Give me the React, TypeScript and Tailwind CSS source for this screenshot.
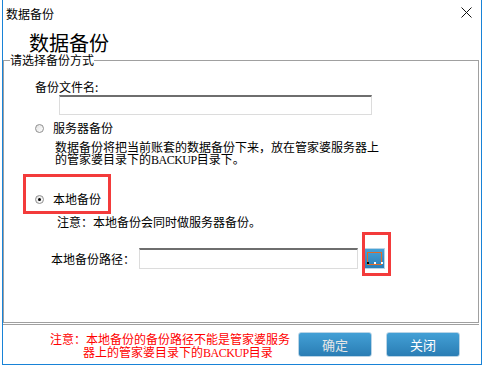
import React from "react";

const font = "font-['Noto_Sans_CJK_SC','Noto_Sans',sans-serif]";

function Radio({ checked }: { checked?: boolean }) {
    return (
        <span className="relative inline-flex w-[9px] h-[9px] rounded-full border border-[#8f8f8f] bg-gradient-to-br from-[#e2e2e2] to-white items-center justify-center">
            {checked && <span className="w-[3px] h-[3px] rounded-full bg-black" />}
        </span>
    );
}

function BlueButton({ label, dim }: { label: string; dim?: boolean }) {
    return (
        <button
            type="button"
            className={`w-[74px] h-[25px] rounded-[3px] border border-[#b9d4e6] bg-gradient-to-b from-[#43a0d6] to-[#2a7db4] text-[13px] leading-[23px] ${dim ? "text-[#e6e6e6]" : "text-white"}`}
        >
            {label}
        </button>
    );
}

export default function App() {
    return (
        <div className={`w-[483px] h-[368px] bg-white overflow-hidden relative text-[12px] text-black ${font}`}>
            <div className="ml-[2px] w-[480px] h-[365px] border-x border-b border-[#1883d7] flex flex-col">
                {/* title bar */}
                <div className="h-[27px] flex items-center justify-between pl-[3px] pr-[9px]">
                    <span className="leading-[14px]">数据备份</span>
                    <svg width="11" height="11" viewBox="0 0 11 11" className="mb-[2px]">
                        <path d="M0.5 0.5 L10.5 10.5 M10.5 0.5 L0.5 10.5" stroke="#111" strokeWidth="1" />
                    </svg>
                </div>

                <div className="h-[26px] pt-[4px] pl-[26px] text-[20px] leading-[24px]">数据备份</div>

                <fieldset className="relative w-[476px] h-[270px] border border-[#a0a0a0]">
                    <legend className="ml-[6px] px-0 leading-[14px]">请选择备份方式</legend>

                    <div className="pl-[31px] pt-[13px] leading-[14px]">备份文件名:</div>
                    <div className="ml-[55px] mt-[1px] w-[313px] h-[20px] border border-[#dcdcdc] border-t-2 border-t-[#6e6e6e] bg-white" />

                    <div className="ml-[31px] mt-[6px] h-[14px] flex items-center gap-[9px]">
                        <Radio />
                        <span className="leading-[14px]">服务器备份</span>
                    </div>
                    <div className="ml-[51px] mt-[6px] leading-[12px]">
                        <div>数据备份将把当前账套的数据备份下来，放在管家婆服务器上</div>
                        <div>
                            的管家婆目录下的<span className="font-['Liberation_Serif',serif] tracking-[-0.5px]">BACKUP</span>目录下。
                        </div>
                    </div>

                    <div className="ml-[31px] mt-[26px] h-[14px] flex items-center gap-[9px]">
                        <Radio checked />
                        <span className="leading-[14px]">本地备份</span>
                    </div>
                    <div className="ml-[53px] mt-[9px] leading-[14px]">注意：本地备份会同时做服务器备份。</div>

                    <div className="ml-[47px] mt-[18px] flex items-center">
                        <span className="w-[88px] leading-[14px] mt-[1px]">本地备份路径：</span>
                        <div className="w-[219px] h-[21px] border border-[#dcdcdc] border-t-2 border-t-[#6e6e6e] bg-white" />
                        <div className="relative ml-[6px] mt-[1px] w-[21px] h-[21px] bg-gradient-to-b from-[#46a3d8] to-[#2b7db5] border border-[#b9d4e6]">
                            <div className="absolute left-[2px] top-[3px] w-[15px] h-[13px] border border-[#e06a28]" />
                            <div className="absolute left-[2px] bottom-[4px] flex gap-[5px]">
                                <span className="w-[2px] h-[2px] bg-black" />
                                <span className="w-[2px] h-[2px] bg-white" />
                                <span className="w-[2px] h-[2px] bg-white" />
                            </div>
                        </div>
                    </div>
                </fieldset>

                {/* footer */}
                <div className="mt-[1px] w-[476px] border-t border-[#a0a0a0] flex-1 flex items-start pt-[6px]">
                    <div className="ml-[47px] w-[242px] pt-[1px] text-[#ff0000] leading-[13px] text-[12px] whitespace-nowrap">
                        <div>注意：本地备份的备份路径不能是管家婆服务</div>
                        <div className="pl-[33px]">
                            器上的管家婆目录下的<span className="font-['Liberation_Serif',serif] tracking-[-0.5px]">BACKUP</span>目录
                        </div>
                    </div>
                    <div className="ml-[6px] flex gap-[14px] pt-[1px]">
                        <BlueButton label="确定" dim />
                        <BlueButton label="关闭" />
                    </div>
                </div>
            </div>

            {/* red annotation boxes */}
            <div className="absolute left-[23px] top-[174px] w-[88px] h-[40px] border-[3px] border-[#f33b3b]" />
            <div className="absolute left-[362px] top-[232px] w-[29px] h-[44px] border-[3px] border-[#f33b3b]" />
        </div>
    );
}
